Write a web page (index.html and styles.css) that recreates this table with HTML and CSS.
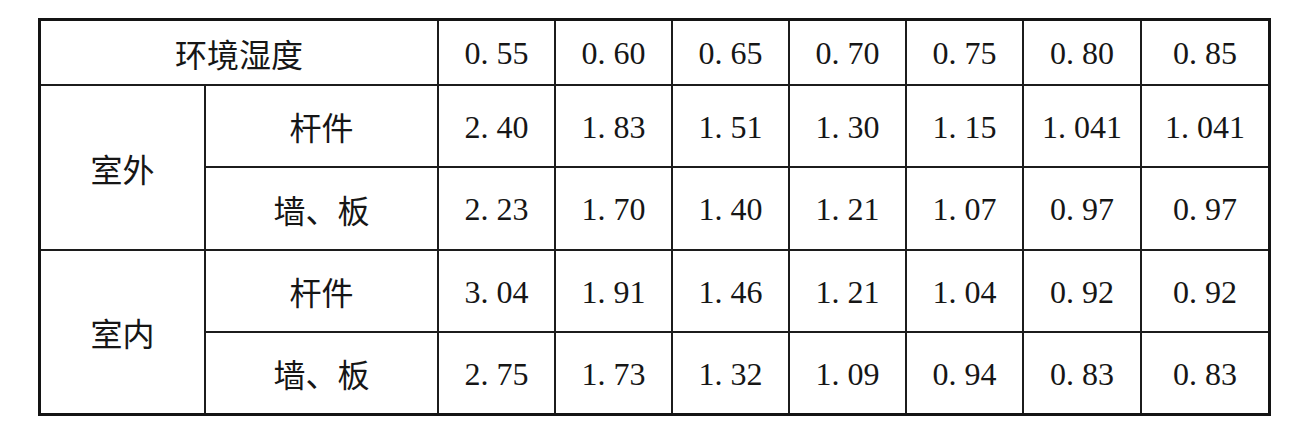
FILE: index.html
```html
<!DOCTYPE html>
<html lang="zh-CN">
<head>
    <meta charset="UTF-8">
    <meta name="viewport" content="width=device-width, initial-scale=1.0">
    <title>环境湿度系数表</title>
    <link rel="stylesheet" href="styles.css">
</head>
<body>
    <div class="page">
        <div class="table">
            <div class="cell cn head">环境湿度</div>
            <div class="cell num">0. 55</div>
            <div class="cell num">0. 60</div>
            <div class="cell num">0. 65</div>
            <div class="cell num">0. 70</div>
            <div class="cell num">0. 75</div>
            <div class="cell num">0. 80</div>
            <div class="cell num">0. 85</div>

            <div class="cell cn group">室外</div>
            <div class="cell cn">杆件</div>
            <div class="cell num">2. 40</div>
            <div class="cell num">1. 83</div>
            <div class="cell num">1. 51</div>
            <div class="cell num">1. 30</div>
            <div class="cell num">1. 15</div>
            <div class="cell num">1. 041</div>
            <div class="cell num">1. 041</div>

            <div class="cell cn">墙、板</div>
            <div class="cell num">2. 23</div>
            <div class="cell num">1. 70</div>
            <div class="cell num">1. 40</div>
            <div class="cell num">1. 21</div>
            <div class="cell num">1. 07</div>
            <div class="cell num">0. 97</div>
            <div class="cell num">0. 97</div>

            <div class="cell cn group">室内</div>
            <div class="cell cn">杆件</div>
            <div class="cell num">3. 04</div>
            <div class="cell num">1. 91</div>
            <div class="cell num">1. 46</div>
            <div class="cell num">1. 21</div>
            <div class="cell num">1. 04</div>
            <div class="cell num">0. 92</div>
            <div class="cell num">0. 92</div>

            <div class="cell cn">墙、板</div>
            <div class="cell num">2. 75</div>
            <div class="cell num">1. 73</div>
            <div class="cell num">1. 32</div>
            <div class="cell num">1. 09</div>
            <div class="cell num">0. 94</div>
            <div class="cell num">0. 83</div>
            <div class="cell num">0. 83</div>
        </div>
    </div>
</body>
</html>
```

FILE: styles.css
```css
body {
    margin: 0;
    background-color: #fff;
    color: #161616;
}
.page {
    padding: 18px 0 0 38px;
}
.table {
    display: grid;
    grid-template-columns: 163px 231px 115px 115px 115px 115px 115px 116px 126px;
    grid-template-rows: 63px 80px 81px 80px 80px;
    gap: 2px;
    width: max-content;
    border: 3px solid #141414;
    background-color: #1c1c1c;
}
.cell {
    background-color: #fff;
    display: flex;
    align-items: center;
    justify-content: center;
    white-space: pre;
}
.head {
    grid-column: span 2;
}
.group {
    grid-row: span 2;
}
.cn {
    font-family: "Noto Sans CJK SC", "Noto Sans", sans-serif;
    font-size: 32px;
    font-weight: 400;
}
.num {
    font-family: "Liberation Serif", "Times New Roman", serif;
    font-size: 32px;
    padding-top: 2px;
}
```
